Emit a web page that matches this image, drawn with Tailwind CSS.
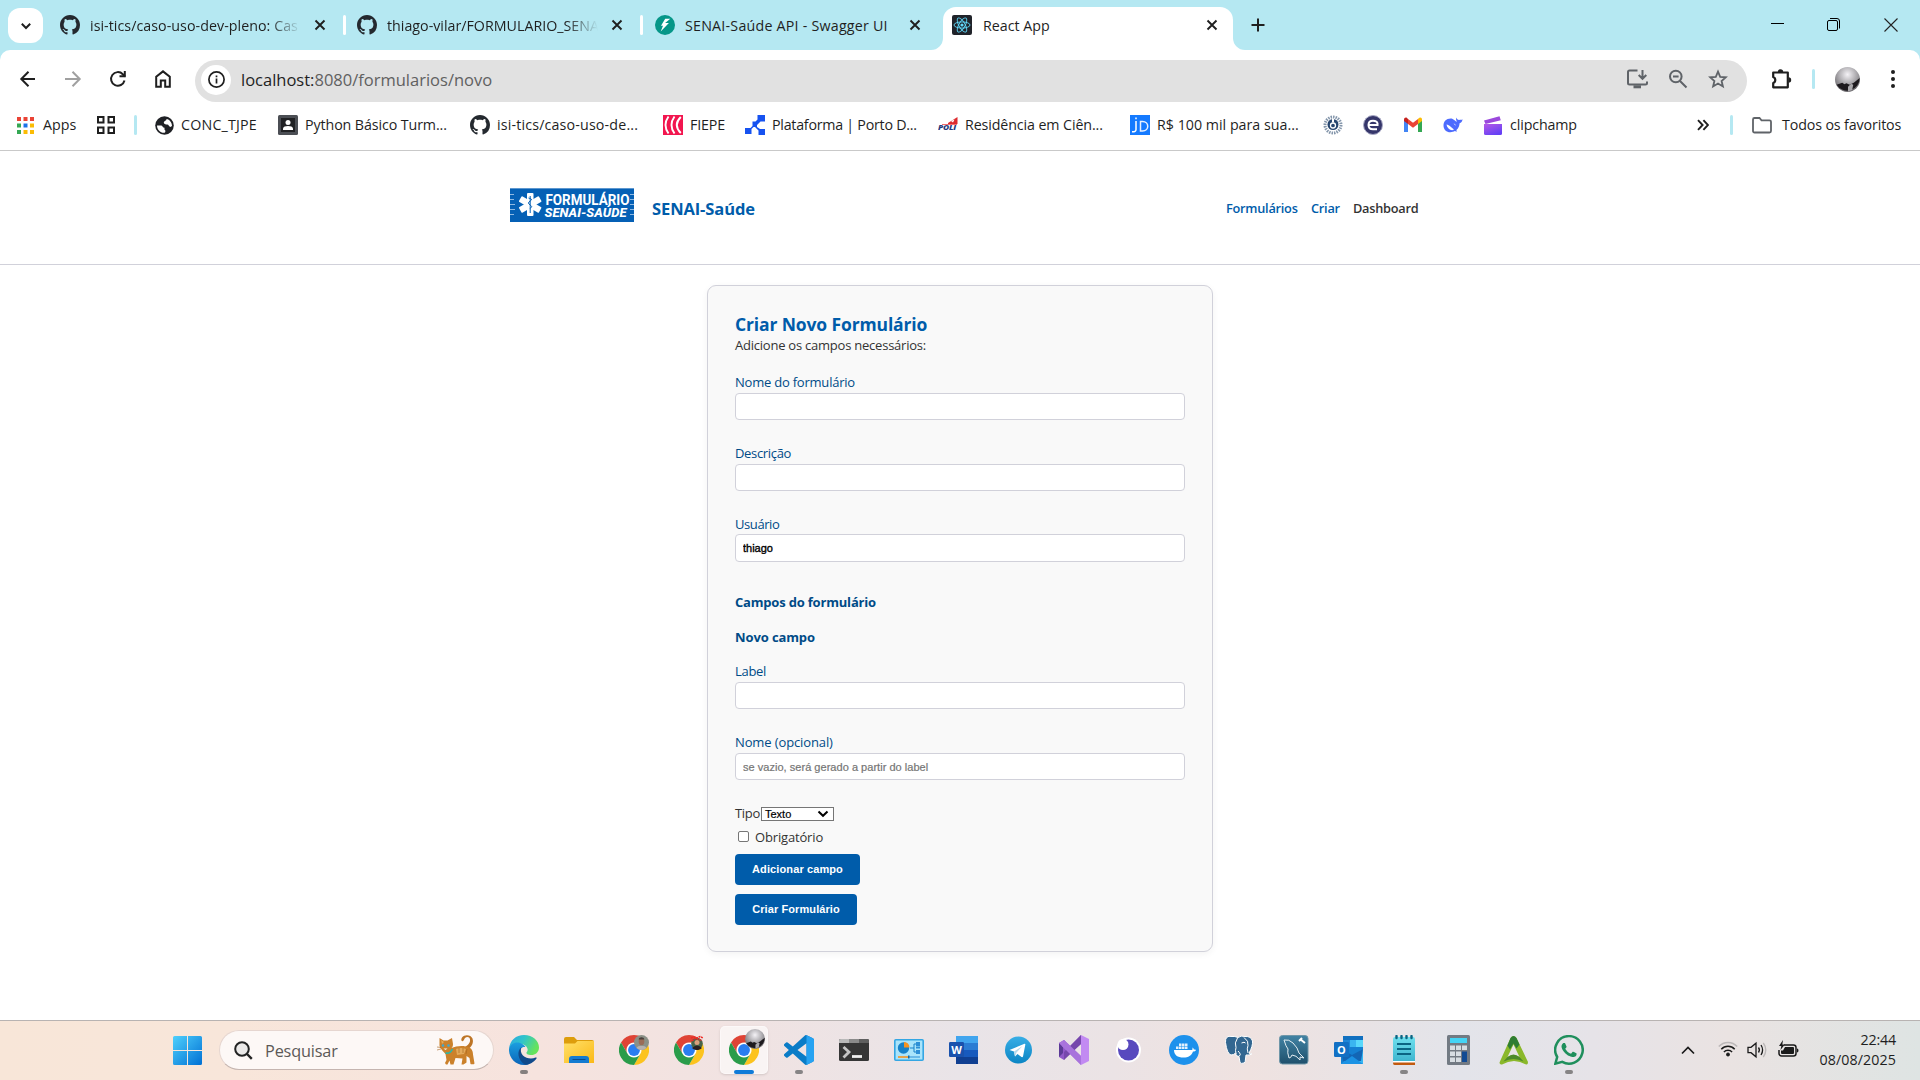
<!DOCTYPE html>
<html lang="pt-BR">
<head>
<meta charset="utf-8">
<title>React App</title>
<script src="https://cdn.jsdelivr.net/npm/@tailwindcss/browser@4"></script>
</head>
<body class="relative flex h-[1080px] w-[1920px] flex-col overflow-hidden bg-white font-['Open_Sans',sans-serif] text-[#1f1f1f]">
<svg class="absolute h-0 w-0">
  <radialGradient id="av" cx=".5" cy=".3" r=".65"><stop offset="0" stop-color="#f4f2f6"/><stop offset=".5" stop-color="#b3b1b5"/><stop offset="1" stop-color="#6e6c70"/></radialGradient>
  <symbol id="github" viewBox="0 0 16 16"><path fill="#24292f" d="M8 0C3.58 0 0 3.58 0 8c0 3.54 2.29 6.53 5.47 7.59.4.07.55-.17.55-.38 0-.19-.01-.82-.01-1.49-2.01.37-2.53-.49-2.69-.94-.09-.23-.48-.94-.82-1.13-.28-.15-.68-.52-.01-.53.63-.01 1.08.58 1.23.82.72 1.21 1.87.87 2.33.66.07-.52.28-.87.51-1.07-1.78-.2-3.64-.89-3.64-3.95 0-.87.31-1.59.82-2.15-.08-.2-.36-1.02.08-2.12 0 0 .67-.21 2.2.82.64-.18 1.32-.27 2-.27s1.36.09 2 .27c1.53-1.04 2.2-.82 2.2-.82.44 1.1.16 1.92.08 2.12.51.56.82 1.27.82 2.15 0 3.07-1.87 3.75-3.65 3.95.29.25.54.73.54 1.48 0 1.07-.01 1.93-.01 2.2 0 .21.15.46.55.38A8.01 8.01 0 0 0 16 8c0-4.42-3.58-8-8-8z"/></symbol>
  <symbol id="x" viewBox="0 0 12 12"><path d="M1.5 1.5l9 9M10.5 1.5l-9 9" stroke="#1f1f1f" stroke-width="1.9" fill="none"/></symbol>
  <symbol id="chrome" viewBox="0 0 48 48"><circle cx="24" cy="24" r="12" fill="#fff"/><path d="M24,12H44.7812a23.9939,23.9939,0,0,0-41.5639.0029L13.6079,30l.0093-.0024A11.9852,11.9852,0,0,1,24,12Z" fill="#df4335"/><circle cx="24" cy="24" r="9.5" fill="#2a7df0"/><path d="M34.3913,30.0029,24.0007,48A23.994,23.994,0,0,0,44.78,12.0031H23.9989l-.0025.0093A11.985,11.985,0,0,1,34.3913,30.0029Z" fill="#fcc31e"/><path d="M13.6086,30.0031,3.218,12.006A23.994,23.994,0,0,0,24.0025,48L34.3931,30.0029l-.0067-.0068a11.9852,11.9852,0,0,1-20.7778.007Z" fill="#2a9c4a"/></symbol>
  <symbol id="avatar" viewBox="0 0 24 24"><circle cx="12" cy="12" r="12" fill="url(#av)"/><path d="M1.500 17l5.500-2 2 1.500 2-1 3 1.500 4-2 5.700-4.500a12 12 0 0 1-22.200 6.500z" fill="#1d1a1e"/><path d="M12.500 23.500V19l3-3 2 1-1 5z" fill="#a9a7ab"/></symbol>
</svg>

<!-- Tab strip -->
<div class="flex h-[50px] shrink-0 items-start bg-[#b5e8f2] pl-2 text-[14.25px] leading-5">
  <div class="mt-2 flex h-[35px] w-[35px] items-center justify-center rounded-xl bg-white"><svg class="h-3 w-3" viewBox="0 0 12 12"><path d="M1.8 3.800L6 8l4.200-4.200" fill="none" stroke="#1f1f1f" stroke-width="2"/></svg></div>
  <div class="mt-[15px] ml-[17px] flex h-5 w-[297px] items-center">
    <svg class="h-5 w-5"><use href="#github"/></svg>
    <div class="mt-px ml-2.5 w-[211px] bg-linear-to-r from-[#1f1f1f] from-85% to-transparent bg-clip-text tracking-[0.04px] whitespace-nowrap text-transparent">isi-tics/caso-uso-dev-pleno: Cas</div>
    <svg class="ml-[13px] h-3 w-3"><use href="#x"/></svg>
    <i class="ml-[17px] h-5 w-[3px] rounded bg-white"></i>
  </div>
  <div class="mt-[15px] flex h-5 w-[298px] items-center">
    <svg class="h-5 w-5"><use href="#github"/></svg>
    <div class="mt-px ml-2.5 w-[211px] bg-linear-to-r from-[#1f1f1f] from-85% to-transparent bg-clip-text whitespace-nowrap text-transparent">thiago-vilar/FORMULARIO_SENA</div>
    <svg class="ml-[13px] h-3 w-3"><use href="#x"/></svg>
    <i class="ml-[17px] h-5 w-[3px] rounded bg-white"></i>
  </div>
  <div class="mt-[15px] flex h-5 w-[288px] items-center">
    <svg class="h-5 w-5" viewBox="0 0 20 20"><circle cx="10" cy="10" r="10" fill="#059688"/><path d="M10.2 3.700h5.100l-5.200 4.200h3.800L5.700 16.500l2.300-5.700H6z" fill="#fff"/></svg>
    <div class="mt-px ml-2.5 w-[212px] tracking-[0.22px] whitespace-nowrap">SENAI-Saúde API - Swagger UI</div>
    <svg class="ml-[12px] h-3 w-3"><use href="#x"/></svg>
  </div>
  <div class="relative mt-[7px] flex h-[43px] w-[290px] items-center rounded-t-[13px] bg-white pb-[7px] pl-[9px]">
    <svg class="absolute bottom-0 -left-3 h-3 w-3" viewBox="0 0 12 12"><path d="M12 0v12H0A12 12 0 0 0 12 0z" fill="#fff"/></svg>
    <svg class="absolute -right-3 bottom-0 h-3 w-3" viewBox="0 0 12 12"><path d="M0 0v12h12A12 12 0 0 1 0 0z" fill="#fff"/></svg>
    <svg class="h-5 w-5" viewBox="0 0 20 20"><rect width="20" height="20" rx="2" fill="#20232a"/><g fill="none" stroke="#61dafb" stroke-width=".9"><ellipse cx="10" cy="10" rx="8" ry="3.1"/><ellipse cx="10" cy="10" rx="8" ry="3.1" transform="rotate(60 10 10)"/><ellipse cx="10" cy="10" rx="8" ry="3.1" transform="rotate(120 10 10)"/></g><circle cx="10" cy="10" r="1.6" fill="#61dafb"/></svg>
    <div class="mt-px ml-[11px] w-[223px] whitespace-nowrap">React App</div>
    <svg class="h-3 w-3"><use href="#x"/></svg>
  </div>
  <svg class="mt-[18px] ml-[18px] h-3.5 w-3.5" viewBox="0 0 14 14"><path d="M7 .5v13M.5 7h13" stroke="#1f1f1f" stroke-width="2"/></svg>
  <div class="mt-[18px] ml-auto flex gap-[43px] pr-[22px]">
    <svg class="h-[13px] w-[13px]" viewBox="0 0 13 13"><path d="M0 5.500h13" stroke="#000"/></svg>
    <svg class="h-[13px] w-[13px]" viewBox="0 0 13 13"><path d="M.5 4A1.500 1.500 0 0 1 2 2.500h7A1.500 1.500 0 0 1 10.500 4v7A1.500 1.500 0 0 1 9 12.500H2A1.500 1.500 0 0 1 .5 11zM3 .5h7A2.500 2.500 0 0 1 12.500 3v7.500" fill="none" stroke="#000"/></svg>
    <svg class="ml-px h-[14px] w-[14px]" viewBox="0 0 14 14"><path d="M.5.5l13 13M13.5.5l-13 13" stroke="#222" stroke-width="1.1"/></svg>
  </div>
</div>

<!-- Toolbar -->
<div class="h-[52px] shrink-0 bg-[#b5e8f2]"><div class="flex h-full items-start rounded-t-[10px] bg-white pt-2.5">
  <div class="flex h-[38px] w-[195px] items-center gap-[25px] pl-[18px]">
    <svg class="h-5 w-5" viewBox="0 0 20 20"><path d="M17 10H3.500M10.500 2.800L3.300 10l7.200 7.200" fill="none" stroke="#1f1f1f" stroke-width="2"/></svg>
    <svg class="h-5 w-5" viewBox="0 0 20 20"><path d="M2 10h14.500M9.500 2.800l7.200 7.200-7.200 7.200" fill="none" stroke="#a0a0a0" stroke-width="2"/></svg>
    <svg class="h-5 w-5" viewBox="0 0 20 20"><path d="M16.500 11.500A6.800 6.800 0 1 1 14.800 5.200L17 7.500" fill="none" stroke="#1f1f1f" stroke-width="2"/><path d="M17.800 2v6.300h-6.300V6.300h4.300V2z" fill="#1f1f1f"/></svg>
    <svg class="h-5 w-5" viewBox="0 0 20 20"><path d="M3.200 17.800V7.800L10 2.400l6.800 5.400v10h-4.600v-6.200H7.800v6.200z" fill="none" stroke="#1f1f1f" stroke-width="2"/></svg>
  </div>
  <div class="flex h-[42px] w-[1552px] items-center rounded-full bg-[#e1e1e1] pr-[19px] pb-1 pl-[6px]">
    <div class="mt-px flex h-[30px] w-[30px] items-center justify-center rounded-full bg-white"><svg class="h-[17px] w-[17px]" viewBox="0 0 17 17"><circle cx="8.5" cy="8.5" r="7.6" fill="none" stroke="#1f1f1f" stroke-width="1.7"/><path d="M8.500 7.500v5M8.500 4.400v1.800" stroke="#1f1f1f" stroke-width="1.7"/></svg></div>
    <div class="ml-[10px] pt-0.5 text-[16.5px] leading-6 whitespace-nowrap text-[#606060]"><span class="text-[#1f1f1f]">localhost:</span>8080/formularios/novo</div>
    <div class="ml-auto flex items-center gap-5">
      <svg class="h-[22px] w-[22px]" viewBox="0 0 22 22" fill="none" stroke="#5f6368" stroke-width="2"><path d="M11.500 2.500H3.500a1.500 1.500 0 0 0-1.500 1.500v11a1.500 1.500 0 0 0 1.500 1.500h16a1.500 1.500 0 0 0 1.500-1.500V13.500M16.500 2v8.500M12.700 7l3.800 3.800L20.300 7"/><path d="M7.500 18.800h7.500" stroke-width="3"/></svg>
      <svg class="h-5 w-5" viewBox="0 0 20 20" fill="none" stroke="#5f6368" stroke-width="2"><circle cx="7.8" cy="7.5" r="5.8"/><path d="M12 12l6.500 6.500M5 7.500h5.600"/></svg>
      <svg class="h-5 w-5" viewBox="0 0 20 20"><path d="M10 2.600l2.200 5.200 5.600.5-4.200 3.700 1.300 5.500L10 14.600l-4.900 2.900 1.300-5.500L2.200 8.300l5.600-.5z" fill="none" stroke="#5f6368" stroke-width="1.8"/></svg>
    </div>
  </div>
  <div class="ml-[23px] flex h-[38px] items-center">
    <svg class="h-[23px] w-[23px]" viewBox="0 0 23 23"><path d="M3.200 4.500h14.600v14.800H3.200v-4.300a3.200 3.200 0 0 0 0-6z" fill="none" stroke="#1f1f1f" stroke-width="2.2" stroke-linejoin="round"/><path d="M7.800 4a2.700 2.700 0 0 1 5.400 0zM18.500 9.200a2.700 2.700 0 0 1 0 5.400z" fill="#1f1f1f"/></svg>
    <i class="ml-[19px] h-5 w-[3px] rounded bg-[#b5e8f2]"></i>
    <svg class="ml-[20px] h-[25px] w-[25px]"><use href="#avatar"/></svg>
    <svg class="ml-[30px] h-5 w-1.5" viewBox="0 0 6 20" fill="#1f1f1f"><circle cx="3" cy="3" r="2"/><circle cx="3" cy="10" r="2"/><circle cx="3" cy="17" r="2"/></svg>
  </div>
</div></div>

<!-- Bookmarks bar -->
<div class="flex h-[49px] shrink-0 items-center border-b border-[#c9c9c9] pb-[2px] pl-[17px] text-[14.25px] leading-5 whitespace-nowrap">
  <div class="flex w-[80px] items-center gap-[9px]"><svg class="h-[17px] w-[17px]" viewBox="0 0 17 17"><path d="M0 0h4v4H0zM6.500 0h4v4h-4zM13 0h4v4h-4z" fill="#ea4335"/><path d="M0 6.500h4v4H0zM0 13h4v4H0z" fill="#34a853"/><path d="M6.500 6.500h4v4h-4z" fill="#1a73e8"/><path d="M13 6.500h4v4h-4zM6.500 13h4v4h-4zM13 13h4v4h-4z" fill="#fbbc04"/></svg>Apps</div>
  <svg class="h-[18px] w-[18px]" viewBox="0 0 18 18" fill="none" stroke="#1f1f1f" stroke-width="2"><path d="M1 1h5.500v5.500H1zM11.500 1H17v5.500h-5.500zM1 11.500h5.500V17H1zM11.500 11.500H17V17h-5.500z"/></svg>
  <i class="ml-[19px] h-5 w-[3px] rounded bg-[#b5e8f2]"></i>
  <div class="ml-[18px] flex w-[123px] items-center gap-[7px] tracking-[0.2px]"><svg class="h-[19px] w-[19px]" viewBox="0 0 19 19"><circle cx="9.5" cy="9.5" r="9.3" fill="#1f2125"/><path d="M2 9.500h4c1.700 0 1.700 2.300 3.500 2.300v2c1.200 0 1.200 3 0 3C5 17 2 13.500 2 9.500zM11.500 3c0 2-2.500 1.800-2.700 3.600-.1 1.500 1.800 2 3.500 2 1.500 0 1.200 2 3 2.300L17 10c0-3.500-2.300-6.500-5.500-7z" fill="#fff"/></svg>CONC_TJPE</div>
  <div class="flex w-[192px] items-center gap-[7px] tracking-[-0.1px]"><svg class="h-5 w-5" viewBox="0 0 20 20"><rect width="20" height="20" rx="1.5" fill="#4b4e54"/><rect x="3" y="3" width="14" height="14" fill="#202124"/><circle cx="10" cy="7.5" r="2.5" fill="#fff"/><path d="M5 15v-1.500c0-3.300 10-3.300 10 0V15z" fill="#fff"/></svg>Python Básico Turm...</div>
  <div class="flex w-[193px] items-center gap-[7px] tracking-[0.16px]"><svg class="h-5 w-5"><use href="#github"/></svg>isi-tics/caso-uso-de...</div>
  <div class="flex w-[82px] items-center gap-[7px] tracking-[-0.15px]"><svg class="h-5 w-5" viewBox="0 0 20 20"><path fill="#f2164f" d="M0 0h20v20H0z"/><path d="M5.500 1.500q-6 8.500 0 17M11.500 1.500q-6 8.500 0 17M17.800 2q-8 8 0 16" fill="none" stroke="#fff" stroke-width="1.9"/></svg>FIEPE</div>
  <div class="flex w-[193px] items-center gap-[7px] tracking-[-0.25px]"><svg class="h-5 w-5" viewBox="0 0 20 20" fill="#1652f0"><path d="M12.500 0H20v6.500h-4.500L12 10v2l3 2h5v6h-6.500v-4.500L10 12H8.500L6.500 14v5H0v-6h5.500L7.500 11V6.500h3l2-2z"/></svg>Plataforma | Porto D...</div>
  <div class="flex w-[192px] items-center gap-[7px] tracking-[-0.11px]"><svg class="h-5 w-5" viewBox="0 0 20 20"><path d="M10 8L19.500 2v7q-6 1-9.500.500z" fill="#dd2b2e"/><path d="M13 6l3.500-1.500L15 7.500z" fill="#fff"/><path d="M4 9.500h15" stroke="#f36d6d"/><text x="0" y="14.5" font-family="Open Sans,sans-serif" font-weight="800" font-style="italic" font-size="6" fill="#253a7d" textLength="18" lengthAdjust="spacingAndGlyphs">POLI</text></svg>Residência em Ciên...</div>
  <div class="flex w-[193px] items-center gap-[7px]"><svg class="h-5 w-5" viewBox="0 0 20 20"><path fill="#147aff" d="M0 0h20v20H0z"/><path d="M6 6v8.500q0 2.500-4 2.300M6 2.500v1.800" stroke="#fff" stroke-width="1.5" fill="none"/><path d="M10.500 6.500v9.500h2c7 0 7-9.500 0-9.500z" stroke="#e6f0ff" stroke-width="1.5" fill="none"/></svg>R$ 100 mil para sua...</div>
  <div class="flex gap-5">
    <svg class="h-5 w-5" viewBox="0 0 20 20"><circle cx="10" cy="10" r="8" fill="none" stroke="#8496ab" stroke-width="3" stroke-dasharray="1.500 1"/><circle cx="10" cy="9.5" r="5.5" fill="#27466f"/><circle cx="10" cy="10.5" r="2.5" fill="none" stroke="#fff" stroke-width="1.3"/><path d="M9 4h2v3.500H9z" fill="#fff"/></svg>
    <svg class="h-5 w-5" viewBox="0 0 20 20"><circle cx="10" cy="10" r="9.5" fill="#35366a" stroke="#a8a9c4"/><path d="M5.500 10h9V8.500Q14 5.700 10 5.700q-4.500 0-4.500 4.300t4.500 4.300h4" fill="none" stroke="#fff" stroke-width="2"/></svg>
    <svg class="h-5 w-5" viewBox="0 0 20 20"><path d="M1 17V4.500l4 3V17z" fill="#4285f4"/><path d="M15 17V7.500l4-3V17z" fill="#34a853"/><path d="M15 3.800l1.200-.9C17.500 2 19 2.800 19 4.500V6l-4 3z" fill="#fbbc04"/><path d="M5 4l5 3.800L15 4v5l-5 3.800L5 9z" fill="#ea4335"/><path d="M1 4.500C1 2.800 2.800 2 4 2.900L5 4v5L1 6z" fill="#c5221f"/></svg>
    <svg class="h-5 w-5" viewBox="0 0 20 20"><path d="M19.500 4.200c-1.300 1-2.300.3-3.400.8-1.300-.2-2.500-1-2.800-2.500-.5 1.500-.2 3 .8 4.200-2-.5-3.100-2.300-4.900-3C3.500 3 .5 6.500.5 10.500c0 4 3 6.800 6.800 6.800 2 0 3.400-.5 4.500-1.200l2 .6-.4-1.600c2-1.600 3-4.200 3.200-6.900 1.500-.5 2.800-1.700 2.900-4z" fill="#4d6bfe"/><path d="M3.500 9.500c3 .2 5 3.500 7.500 4.800-1 .9-2 1-3 .7-2.300-.8-4-2.800-4.500-5.500zM10.500 8.500c1.200 0 2.200 1 2.200 2.200z" fill="#fff"/></svg>
  </div>
  <div class="ml-[21px] flex w-[213px] items-center gap-2 tracking-[-0.13px]"><svg class="h-[19px] w-[18px]" viewBox="0 0 18 19"><linearGradient id="cc" x1="0" y1="0" x2=".6" y2="1"><stop stop-color="#b659e6"/><stop offset="1" stop-color="#6540f5"/></linearGradient><path d="M0 4.500L15.500.2l1.300 4L1.500 8z" fill="#9b48dc"/><path d="M0 8h18v9.500a1.500 1.500 0 0 1-1.500 1.500h-15A1.500 1.500 0 0 1 0 17.500z" fill="url(#cc)"/></svg>clipchamp</div>
  <svg class="h-3 w-3" viewBox="0 0 12 12"><path d="M1 1.200L5.600 6 1 10.800M6.400 1.200L11 6l-4.600 4.800" fill="none" stroke="#1f1f1f" stroke-width="1.9"/></svg>
  <i class="ml-[21px] h-5 w-[3px] rounded bg-[#b5e8f2]"></i>
  <svg class="ml-[19px] h-[18px] w-5" viewBox="0 0 20 18"><path d="M1 15V3.500A1.500 1.500 0 0 1 2.500 2h5l2 2.300h8A1.500 1.500 0 0 1 19 5.800V15a1.500 1.500 0 0 1-1.500 1.500h-15A1.500 1.500 0 0 1 1 15z" fill="none" stroke="#5f6368" stroke-width="1.8"/></svg>
  <span class="ml-[10px] tracking-[-0.13px]">Todos os favoritos</span>
</div>

<!-- Site header -->
<header class="flex h-[114px] shrink-0 items-start border-b border-[#d1d1da] pl-[510px] text-[13px] font-semibold whitespace-nowrap">
  <svg class="mt-[37px] h-[34px] w-[124px]" viewBox="0 0 124 34"><path fill="#0560b5" d="M0 0h124v34H0z"/><path d="M0 .5h124" stroke="#5d97cf"/><path d="M0 6.500h4M0 11.500h4M0 16.500h5M0 21.500h5M0 26.500h4M120 6.500h4M120 11.500h4M120 16.500h4M120 21.500h4M120 26.500h4" stroke="#8fb9e2"/><g fill="#fff"><rect x="17" y="5" width="6.5" height="23" rx="1"/><rect x="17" y="5" width="6.5" height="23" rx="1" transform="rotate(60 20.2 16.5)"/><rect x="17" y="5" width="6.5" height="23" rx="1" transform="rotate(120 20.2 16.5)"/></g><path d="M20.200 8v17M18.500 10q5 1 1.700 3t0 4q3 1.500 0 3.500" stroke="#0560b5" fill="none"/><text x="35.5" y="16.500" font-family="Roboto,sans-serif" font-weight="700" font-size="14.5" fill="#fff" textLength="84" lengthAdjust="spacingAndGlyphs">FORMULÁRIO</text><text x="34.5" y="29" font-family="Roboto,sans-serif" font-weight="800" font-style="italic" font-size="13" fill="#fff" textLength="82">SENAI-SAÚDE</text></svg>
  <div class="mt-[46px] ml-[18px] w-[574px] text-[16.5px] leading-[24px] font-bold tracking-[-0.1px] text-[#005caa]">SENAI-Saúde</div>
  <nav class="mt-[48px] flex text-[12.75px] leading-[18px] tracking-[-0.25px] text-[#005caa]"><span class="w-[85px]">Formulários</span><span class="w-[42px]">Criar</span><span class="text-[#333]">Dashboard</span></nav>
</header>

<!-- Form -->
<main class="flex h-[755px] shrink-0 justify-center pt-5 text-[13px] leading-4 text-[#333]">
  <div class="flex h-[667px] w-[506px] flex-col items-start rounded-[9px] border border-[#d1d1da] bg-[#f9f9f9] px-[27px] pt-[27px] shadow-[0_2px_7px_rgba(0,0,0,0.05)]">
    <h1 class="text-[17.5px] leading-[22px] font-bold tracking-[-0.13px] text-[#005caa]">Criar Novo Formulário</h1>
    <p class="mt-0.5 tracking-[-0.23px]">Adicione os campos necessários:</p>
    <label class="mt-[21px] tracking-[-0.22px] text-[#004b87]">Nome do formulário</label>
    <input class="mt-[3px] h-[27px] w-[450px] rounded-[4px] border border-[#d1d1da] bg-white">
    <label class="mt-[25px] tracking-[-0.33px] text-[#004b87]">Descrição</label>
    <input class="mt-[3px] h-[27px] w-[450px] rounded-[4px] border border-[#d1d1da] bg-white">
    <label class="mt-[25px] tracking-[-0.42px] text-[#004b87]">Usuário</label>
    <input value="thiago" class="mt-[2px] h-[28px] w-[450px] rounded-[4px] border border-[#d1d1da] bg-white px-[7px] font-['Liberation_Sans',sans-serif] text-[11px] text-black [-webkit-text-stroke:0.35px_#000]">
    <h2 class="mt-[32px] font-bold tracking-[-0.19px] text-[#004b87]">Campos do formulário</h2>
    <h3 class="mt-[19px] font-bold tracking-[-0.11px] text-[#004b87]">Novo campo</h3>
    <label class="mt-[18px] tracking-[-0.3px] text-[#004b87]">Label</label>
    <input class="mt-[3px] h-[27px] w-[450px] rounded-[4px] border border-[#d1d1da] bg-white">
    <label class="mt-[25px] tracking-[-0.12px] text-[#004b87]">Nome (opcional)</label>
    <input placeholder="se vazio, será gerado a partir do label" class="mt-[3px] h-[27px] w-[450px] rounded-[4px] border border-[#d1d1da] bg-white px-[7px] font-['Liberation_Sans',sans-serif] text-[11px] tracking-[0.03px] placeholder:text-[#757575] placeholder:[-webkit-text-stroke:0.2px_#757575]">
    <div class="mt-[25px] flex h-4 items-center"><span class="w-[26px] tracking-[-0.3px]">Tipo</span>
      <div class="mt-px flex h-[14px] w-[73px] items-center justify-between border border-[#767676] bg-white pr-1 pl-[3px] font-['Liberation_Sans',sans-serif] text-[11px] leading-3 text-black [-webkit-text-stroke:0.2px_#000]">Texto<svg class="h-2 w-3" viewBox="0 0 12 8"><path d="M1.500 1.500L6 5.800l4.500-4.300" fill="none" stroke="#000" stroke-width="2"/></svg></div>
    </div>
    <div class="mt-2 flex h-4 items-center"><i class="mr-1.5 -mt-px ml-[3px] h-[11px] w-[11px] rounded-[2px] border border-[#767676] bg-white"></i><span class="tracking-[-0.16px]">Obrigatório</span></div>
    <button class="mt-[9px] h-[31px] w-[125px] rounded-[4px] bg-[#005caa] pb-0.5 font-['Liberation_Sans',sans-serif] text-[11px] font-bold tracking-[0.11px] text-white">Adicionar campo</button>
    <button class="mt-[9px] h-[31px] w-[122px] rounded-[4px] bg-[#005caa] pb-0.5 font-['Liberation_Sans',sans-serif] text-[11px] font-bold tracking-[0.09px] text-white">Criar Formulário</button>
  </div>
</main>

<!-- Taskbar -->
<footer class="flex h-[60px] shrink-0 items-start border-t border-[#b8b3b2] bg-[linear-gradient(90deg,#f8e6d8_0%,#f8e6da_12%,#f6e3de_28%,#f1e3e2_38%,#e9e4e8_50%,#ebe3e5_58%,#efe2e0_65%,#e3e4ea_76%,#e6e3e8_83%,#eae3e2_90%,#dee4e3_100%)] pl-[173px]">
  <svg class="mt-[15px] h-[29px] w-[29px]" viewBox="0 0 29 29"><linearGradient id="win" x1="0" y1="0" x2="1" y2="1"><stop stop-color="#4fd0fc"/><stop offset="1" stop-color="#0070d4"/></linearGradient><path d="M1.500 0H14v14H0V1.500A1.500 1.500 0 0 1 1.500 0zM15 0h12.500A1.500 1.500 0 0 1 29 1.500V14H15zM0 15h14v14H1.500A1.500 1.500 0 0 1 0 27.500zM15 15h14v12.500a1.500 1.500 0 0 1-1.500 1.500H15z" fill="url(#win)"/></svg>
  <div class="mt-[9px] ml-[17px] flex h-[40px] w-[275px] items-center rounded-full border border-[#e6d6d0] border-b-[#c5b5b0] bg-[#fdf8f6] pl-[14px] text-[16.25px] leading-5 text-[#5c5856]">
    <svg class="h-[19px] w-[19px]" viewBox="0 0 19 19"><circle cx="8" cy="8" r="6.8" fill="#ebe9e8" stroke="#222" stroke-width="2"/><path d="M13 13l4.800 4.800" stroke="#222" stroke-width="2.4"/></svg>
    <div class="mt-0.5 ml-3 w-[172px] tracking-[-0.15px]">Pesquisar</div>
    <svg class="mb-0.5 h-[31px] w-[38px]" viewBox="0 0 38 31"><path d="M31 15C34.500 13 37 9 35.500 4.500 34 .5 27.500 0 25 3.500c-1 1.500-1 3.300.3 3.700 1.500.4 1.700-2.200 2.700-3.200 2-1.700 4.500-1 5 1.200C33.500 9 31 11 28 13z" fill="#bd7526"/><path d="M2.500 4l4 2.500h4L15 4l1 6c0 2-.5 3-1.500 4 4-1.500 9-2.500 14-1.500 5 .5 7.500 3 7.500 8l1.500 9c0 1-3.500 1-4 .5l-1-6-3-2v6.500l-3 2h-2l1-6-7-.5-2 6.500h-3l-1-4-2 4H9l-1-1.500 1.500-3-1-6C5 16 2 13.500 2.500 10z" fill="#cb812b"/><path d="M19 15q5-2 10 0l-2 5-7 1zM4 6l3 2-2 2z" fill="#e3a95a"/><path d="M8.500 19q5 1 7-4" stroke="#2db5a7" stroke-width="1.6" fill="none"/><circle cx="6" cy="11.500" r="1.3" fill="#3fa8cf"/><circle cx="11.5" cy="11.5" r="1.3" fill="#3fa8cf"/><path d="M6.500 14.500h4l-2 1.500z" fill="#fff3e0"/><path d="M0 13l4 .5M0 16l4-1M22 14v5M26 14v5M30 15l-1 5" stroke="#a4641d" stroke-width=".6"/></svg>
  </div>
  <div class="ml-[15px] flex gap-[25px] pt-[14px]">
    <!-- Edge -->
    <div class="relative"><svg class="h-[30px] w-[30px]" viewBox="0 0 30 30"><linearGradient id="eg" x1="0" x2="1" y1="0" y2=".4"><stop stop-color="#2aa5e6"/><stop offset=".5" stop-color="#31c5c9"/><stop offset="1" stop-color="#66e35c"/></linearGradient><linearGradient id="eb" x1="0" y1="0" x2="0" y2="1"><stop stop-color="#1b9fe0"/><stop offset="1" stop-color="#0b64b8"/></linearGradient><path d="M0 14C1 5 7 0 15 0c9 0 15 6 15 12.500 0 5-4 7.500-7.500 7.500-4 0-5.500-1.500-5-2.500 3-3 0-7-4-8.500C8 7.500 2 9 0 14z" fill="url(#eg)"/><path d="M0 14C1 9.500 5 7 9.500 7.500c4 .5 6 3 7 4.500-5-1-8 5-5 10 3 4.500 9 6 14 3-3 3-6.500 5-10.500 5C6 30-.5 22 0 14z" fill="url(#eb)"/><path d="M12.500 12c-5 4-4 13 3.500 17.800 4 0 8.500-2.300 11.500-6.300.5-1-.3-1.300-1-1C20 25.500 9 21 12.500 12z" fill="#114a8b"/></svg><i class="absolute top-[35px] left-[11px] h-1 w-2 rounded-full bg-[#857f7e]"></i></div>
    <!-- Explorer -->
    <svg class="h-[30px] w-[30px]" viewBox="0 0 30 30"><linearGradient id="fo" x1="0" y1="0" x2="1" y2="1"><stop stop-color="#ffe069"/><stop offset="1" stop-color="#fbb917"/></linearGradient><path d="M0 4q0-2 2-2h8l3 3h15q2 0 2 2v8H0z" fill="#dd9d0c"/><path d="M0 8.500h11L13.500 6H30v22H0z" fill="url(#fo)"/><path d="M5 28v-4q0-3 3-3h14q3 0 3 3v4z" fill="#147bd1"/><path d="M8.500 24.500h13" stroke="#0a4b8c"/></svg>
    <!-- Chrome profiles -->
    <div class="relative"><svg class="h-[30px] w-[30px]"><use href="#chrome"/></svg><svg class="absolute top-0 left-[15px] h-[15px] w-[15px]" viewBox="0 0 15 15"><circle cx="7.5" cy="7.5" r="7.5" fill="#8b9087"/><path d="M2.500 13c1-3 9-3 10 0a7.500 7.500 0 0 1-10 0z" fill="#b8b2ae"/><ellipse cx="7.5" cy="6.5" rx="2.8" ry="3.8" fill="#9b6c58"/><path d="M4.700 4.500c0-3 5.600-3 5.600 0z" fill="#4a403c"/></svg></div>
    <div class="relative"><svg class="h-[30px] w-[30px]"><use href="#chrome"/></svg><svg class="absolute top-0 left-[15px] h-[15px] w-[15px]" viewBox="0 0 15 15"><circle cx="8" cy="8.5" r="5.8" fill="#47644a"/><path d="M2 3l3-1 3 1 3-1.500 3 1.500M3 6l3-2.500 4 1 3 1" stroke="#ee2a25" stroke-width="1.5" fill="none" stroke-dasharray="2 .7"/><circle cx="8" cy="7.5" r="2.5" fill="#d99f7d"/><path d="M3 13q5-5 10 0a7 7 0 0 1-10 0z" fill="#2b2020"/></svg></div>
    <div class="relative"><div class="absolute -top-[9px] -left-[9px] h-12 w-12 rounded-[5px] border border-white/40 bg-white/60 shadow-sm"></div><svg class="relative h-[30px] w-[30px]"><use href="#chrome"/></svg><svg class="absolute -top-1.5 left-4 h-5 w-5"><use href="#avatar"/></svg><i class="absolute top-[35px] left-[5px] h-1 w-5 rounded-full bg-[#0f7bd8]"></i></div>
    <!-- VS Code -->
    <div class="relative"><svg class="h-[30px] w-[30px]" viewBox="0 0 24 24"><path fill="#0a7cc7" d="M23.15 2.587L18.21.21a1.494 1.494 0 0 0-1.705.29l-9.46 8.63-4.12-3.128a.999.999 0 0 0-1.276.057L.327 7.261A1 1 0 0 0 .326 8.74L3.899 12 .326 15.26a1 1 0 0 0 .001 1.479L1.65 17.94a.999.999 0 0 0 1.276.057l4.12-3.128 9.46 8.63a1.492 1.492 0 0 0 1.704.29l4.942-2.377A1.5 1.5 0 0 0 24 20.06V3.939a1.5 1.5 0 0 0-.85-1.352zm-5.146 14.861L10.826 12l7.178-5.448v10.896z"/><path d="M18 .2l5.150 2.387A1.500 1.500 0 0 1 24 3.900v16.160a1.500 1.500 0 0 1-.85 1.352L18 23.900z" fill="#27a3f2"/></svg><i class="absolute top-[35px] left-[11px] h-1 w-2 rounded-full bg-[#868485]"></i></div>
    <!-- Terminal -->
    <svg class="h-[30px] w-[30px]" viewBox="0 0 30 30"><rect y="4" width="30" height="22" rx="1.5" fill="#363636"/><path d="M0 8V5.500Q0 4 1.500 4H10v4z" fill="#b9b9b9"/><path d="M10 4h10v4H10z" fill="#8a8a8a"/><path d="M20 4h8.500Q30 4 30 5.500V8H20z" fill="#5f5f5f"/><path d="M4.500 12l5.500 5-5.500 5.500" fill="none" stroke="#c5c5c5" stroke-width="2.8"/><path d="M13 21.500h10" stroke="#efefef" stroke-width="2.8"/></svg>
    <!-- Control panel -->
    <svg class="h-[30px] w-[30px]" viewBox="0 0 30 30"><rect x=".8" y="4.8" width="28.4" height="20.4" rx="1" fill="#a9e4fb" stroke="#34a6e3" stroke-width="1.6"/><circle cx="9.5" cy="13" r="5.7" fill="#1681c9"/><path d="M10 7a6 6 0 0 1 5.500 5.500H10z" fill="#f59321"/><path d="M16 13h4v-4h3M20 13v4h3" fill="none" stroke="#1681c9"/><path d="M22 7h4v4h-4zM22 15h4v4h-4zM22 11.500h4v2h-4z" fill="#2d8fd6"/><path d="M4 22h10" stroke="#f59321" stroke-width="1.6"/><path d="M14 22h12" stroke="#2d8fd6"/><path d="M14 20.500h1.500v3H14z" fill="#1466a0"/></svg>
    <!-- Word -->
    <svg class="h-[30px] w-[30px]" viewBox="0 0 30 30"><path d="M7 1h22v7H7z" fill="#41a5ee"/><path d="M7 8h22v7H7z" fill="#2b7cd3"/><path d="M7 15h22v7H7z" fill="#185abd"/><path d="M7 22h22v7H7z" fill="#103f91"/><rect y="7" width="15" height="15" rx="1.2" fill="#1a52ad"/><text x="7.5" y="18.5" text-anchor="middle" font-family="Open Sans,sans-serif" font-weight="700" font-size="11" fill="#fff">W</text></svg>
    <!-- Telegram -->
    <svg class="h-[30px] w-[30px]" viewBox="0 0 30 30"><linearGradient id="tg" x1="0" y1="0" x2="0" y2="1"><stop stop-color="#38aee6"/><stop offset="1" stop-color="#0b85c4"/></linearGradient><circle cx="14.5" cy="15" r="13.5" fill="url(#tg)"/><path d="M5.500 15L20.500 8.700q1-.3.800 1L19 21.500q-.5 1-1.500.5L13.500 19l-2.500 2.500-1-5z" fill="#fff"/><path d="M10 16.500l8.500-5.500-6 6.500-1.500 4z" fill="#b5d9ec"/></svg>
    <!-- Visual Studio -->
    <svg class="h-[30px] w-[30px]" viewBox="0 0 30 30"><path d="M0 8l5-3 6 6.500 11-11.500v9L7.500 21 5 25l-5-3z" fill="#9058c8"/><path d="M0 8l4 4v6l-4 4z" fill="#5b3a96"/><path d="M5 5l17 16v9L0 8z" fill="#aa76dd"/><path d="M22 0l8 4v22l-8 4z" fill="#c28af2"/><path d="M22 0L5 17v8L22 9z" fill="#7647ac"/><path d="M5 5l17 16v9L11 19 3 11z" fill="#a873dc"/></svg>
    <!-- Insomnia -->
    <svg class="h-[30px] w-[30px]" viewBox="0 0 30 30"><circle cx="14.5" cy="15" r="12.5" fill="#fff"/><circle cx="14.5" cy="15" r="10.5" fill="#5849be"/><circle cx="9" cy="9.5" r="5.5" fill="#fff"/></svg>
    <!-- Docker -->
    <svg class="h-[30px] w-[30px]" viewBox="0 0 30 30"><circle cx="15" cy="15" r="15" fill="#1d91ec"/><path d="M5 15h17.500c1 0 1-.5 1-2.500 1 .5 1.300 1.300 1.300 2 1 0 1.700 0 2.200.5-.5 1-1.500 1.500-3 1.500-1.500 4-4.500 6-9.500 6-6 0-9.500-2.500-9.500-7.500z" fill="#fff"/><path d="M7 11.500h2.500V14H7zM10 11.500h2.500V14H10zM13 11.500h2.500V14H13zM16 11.500h2.500V14H16zM10 8.500h2.500V11H10zM13 8.500h2.500V11H13zM16 8.500h2.500V11H16z" fill="#e3f1fd"/></svg>
    <!-- PostgreSQL -->
    <svg class="h-[30px] w-[30px]" viewBox="0 0 30 30"><path d="M8 1.500Q1 0 1.500 7.500 3 19 7 20q3 0 4.500-2l.5.500v2l3 1 1 6q1 1.500 4 .5 1.500-.5 1.500-4l.5-4q3 .5 6-1-2-.5-3-.8Q29 11 28.500 6 27 1 21 1.500 17 .3 14 2.500 10.500 1 8 1.500z" fill="#336791" stroke="#fff" stroke-width="1"/><path d="M13.500 3Q10 8 12 12.500q-1 3 0 6M20 2.500q5 3.500 4 8-1.500 3 0 7.500M15 21q3-1-1-5M17.500 8q3-1.500 4 0" fill="none" stroke="#fff"/></svg>
    <!-- MySQL Workbench -->
    <svg class="h-[30px] w-[30px]" viewBox="0 0 30 30"><linearGradient id="my" x1="0" y1="0" x2="0" y2="1"><stop stop-color="#4283a4"/><stop offset="1" stop-color="#1f506c"/></linearGradient><rect x=".5" y=".5" width="28.5" height="28.5" rx="3" fill="url(#my)" stroke="#6f96a8"/><path d="M5 5q5-1 9 3 5 5 6 10l5 5-4-1v3q-4-5-8-5-1 3-3 3-2-6-1-9-2-2-4-9z" fill="none" stroke="#e3edf2"/><path d="M21 4l5 4M20 6l3-3" stroke="#fff" stroke-width="2"/></svg>
    <!-- Outlook -->
    <svg class="h-[30px] w-[30px]" viewBox="0 0 30 30"><path d="M9 1h20v7H9z" fill="#1070c0"/><path d="M9 5h7v7H9z" fill="#1f86d8"/><path d="M16 5h6v7h-6z" fill="#3ab5f0"/><path d="M22 5h7v7h-7z" fill="#59d8fb"/><path d="M7 12h22v17H7z" fill="#1580d2"/><path d="M29 14v15H7z" fill="#35b6f3"/><path d="M7 14l11 6 11-6-2 12H9z" fill="#1366b5"/><path d="M7 29h22l-11-8z" fill="#1b92e4"/><rect y="7" width="15" height="15" rx="1.2" fill="#1270c4"/><text x="7.5" y="18.5" text-anchor="middle" font-family="Open Sans,sans-serif" font-weight="700" font-size="11" fill="#fff">O</text></svg>
    <!-- Notepad -->
    <div class="relative"><svg class="h-[30px] w-[30px]" viewBox="0 0 30 30"><linearGradient id="np" x1="0" y1="0" x2="0" y2="1"><stop stop-color="#6fe0ee"/><stop offset="1" stop-color="#3fb6cf"/></linearGradient><path d="M4 25h22v5H5.500Q4 30 4 28z" fill="#c25a10"/><path d="M4 25h22v2.500H4z" fill="#fff"/><path d="M4 4q0-2 2-2h18q2 0 2 2v22H4z" fill="url(#np)"/><path d="M7.500 1v2M12.500 1v2M17.500 1v2M22.500 1v2" stroke="#0b6583" stroke-width="2.4" stroke-linecap="round"/><path d="M8 9h14M8 14h14M8 19h14" stroke="#0b6583" stroke-width="1.8"/></svg><i class="absolute top-[35px] left-[11px] h-1 w-2 rounded-full bg-[#868485]"></i></div>
    <!-- Calculator -->
    <svg class="h-[30px] w-[30px]" viewBox="0 0 30 30"><rect x="3" width="23" height="30" rx="1.5" fill="#727a83"/><path d="M6 3h17v5H6z" fill="#44d4f5"/><path d="M6 10.500h5v4.500H6zM12 10.500h5v4.500h-5zM18 10.500h5v4.500h-5zM6 16.500h5V21H6zM12 16.500h5V21h-5zM6 22.500h5V27H6zM12 22.500h5V27h-5z" fill="#d7dde2"/><path d="M18 16.500h5V27h-5z" fill="#124b93"/></svg>
    <!-- Green arrow -->
    <svg class="h-[30px] w-[30px]" viewBox="0 0 30 30"><path d="M11.500 3Q14.500-1 17.500 3L29 27q0 3-2 2.500-12-7-24 0-2.500.5-2.500-2z" fill="#8ab82b"/><path d="M14.500 9.500L8.500 22q6-3.500 12 0z" fill="#e8e4e8"/><path d="M11.500 3Q14.500-1 17.500 3l3 6.500-3 4-3-5-3.500 6-2.500-4z" fill="#2f7d33"/><path d="M8.500 22q6-5 12 0l4 4.500q-10-5-20 0z" fill="#4d8a2a"/></svg>
    <!-- WhatsApp -->
    <div class="relative"><svg class="h-[30px] w-[30px]" viewBox="0 0 24 24" fill="#1f8f5c"><path d="M17.472 14.382c-.297-.149-1.758-.867-2.03-.967-.273-.099-.471-.148-.67.15-.197.297-.767.966-.94 1.164-.173.199-.347.223-.644.075-.297-.15-1.255-.463-2.39-1.475-.883-.788-1.48-1.761-1.653-2.059-.173-.297-.018-.458.13-.606.134-.133.298-.347.446-.52.149-.174.198-.298.298-.497.099-.198.05-.371-.025-.52-.075-.149-.669-1.612-.916-2.207-.242-.579-.487-.5-.669-.51-.173-.008-.371-.01-.57-.01-.198 0-.52.074-.792.372-.272.297-1.04 1.016-1.04 2.479 0 1.462 1.065 2.875 1.213 3.074.149.198 2.096 3.2 5.077 4.487.709.306 1.262.489 1.694.625.712.227 1.36.195 1.871.118.571-.085 1.758-.719 2.006-1.413.248-.694.248-1.289.173-1.413-.074-.124-.272-.198-.57-.347"/><path d="M12.050.9a11 11 0 0 0-9.500 16.700L1.100 22.900l5.500-1.400A11 11 0 1 0 12.050.9z" fill="none" stroke="#1f8f5c" stroke-width="2"/></svg><i class="absolute top-[35px] left-[11px] h-1 w-2 rounded-full bg-[#868485]"></i></div>
  </div>
  <svg class="mt-[24px] ml-[97px] h-[10px] w-[14px]" viewBox="0 0 14 10"><path d="M1 8.500l6-6 6 6" fill="none" stroke="#1a1a1a" stroke-width="1.7"/></svg>
  <svg class="mt-[19px] ml-[23px] h-5 w-5" viewBox="0 0 20 20" fill="none" stroke="#1a1a1a" stroke-width="1.5"><path d="M.8 6.500a12.500 12.500 0 0 1 18.400 0" stroke="#bcb8b8"/><path d="M3.300 9.300a9 9 0 0 1 13.400 0M5.900 12a5.800 5.800 0 0 1 8.200 0"/><circle cx="10" cy="14.500" r="1.5" fill="#1a1a1a" stroke-width="1"/></svg>
  <svg class="mt-[19px] ml-[9px] h-5 w-5" viewBox="0 0 20 20" fill="none" stroke="#1a1a1a" stroke-width="1.3"><path d="M1 7.300h3L9 3.200v13.600l-5-4.100H1z"/><path d="M11.500 7.500q1.800 2.500 0 5M14 5q3.200 5 0 10"/><path d="M16.300 3q5 7 0 14" stroke="#bcb8b8"/></svg>
  <svg class="mt-[18px] ml-[11px] h-5 w-[21px]" viewBox="0 0 21 20"><path d="M6 6h9.500A2.500 2.500 0 0 1 18 8.500v6A2.500 2.500 0 0 1 15.500 17h-12A2.500 2.500 0 0 1 1 14.500V11" fill="none" stroke="#1a1a1a" stroke-width="1.5"/><path d="M7 8h8q1 0 1 1v5q0 1-1 1H4q-1 0-1-1v-2.500h2z" fill="#1a1a1a"/><path d="M19 9.500q1.500 0 1.500 2t-1.500 2zM5 1L1 7h2.300L2.500 11 6.800 5.500H4.300z" fill="#1a1a1a"/></svg>
  <div class="mt-[9px] mr-[24px] ml-auto text-right text-[14.25px] leading-5"><div class="tracking-[-0.15px]">22:44</div><div class="tracking-[0.09px]">08/08/2025</div></div>
</footer>
</body>
</html>
